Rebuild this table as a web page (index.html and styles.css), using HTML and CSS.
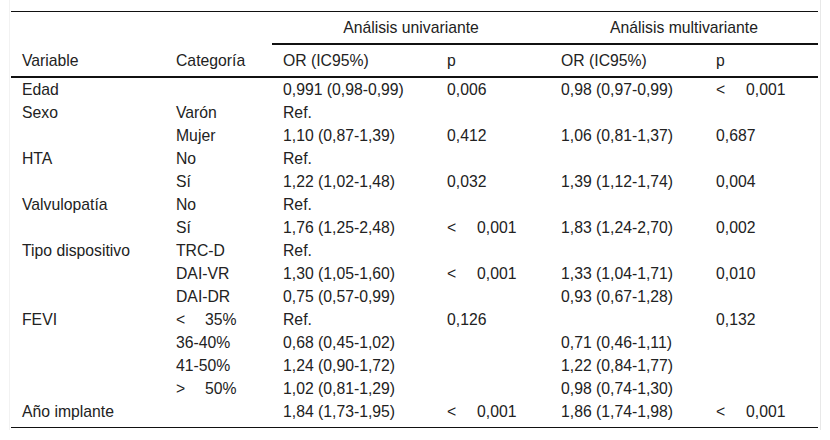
FILE: index.html
```html
<!DOCTYPE html>
<html lang="es">
<head>
<meta charset="utf-8">
<title>Tabla</title>
<link rel="stylesheet" href="styles.css">
</head>
<body>
<div class="frame">
<table class="tbl">
  <colgroup>
    <col class="c1"><col class="c2"><col class="c3"><col class="c4"><col class="c5"><col class="c6">
  </colgroup>
  <thead>
    <tr class="group">
      <th></th><th></th>
      <th colspan="2" class="gh">Análisis univariante</th>
      <th colspan="2" class="gh">Análisis multivariante</th>
    </tr>
    <tr class="cols">
      <th>Variable</th><th>Categoría</th><th>OR (IC95%)</th><th>p</th><th>OR (IC95%)</th><th>p</th>
    </tr>
  </thead>
  <tbody>
    <tr><td>Edad</td><td></td><td>0,991 (0,98-0,99)</td><td>0,006</td><td>0,98 (0,97-0,99)</td><td><span class="sym">&lt;</span>0,001</td></tr>
    <tr><td>Sexo</td><td>Varón</td><td>Ref.</td><td></td><td></td><td></td></tr>
    <tr><td></td><td>Mujer</td><td>1,10 (0,87-1,39)</td><td>0,412</td><td>1,06 (0,81-1,37)</td><td>0,687</td></tr>
    <tr><td>HTA</td><td>No</td><td>Ref.</td><td></td><td></td><td></td></tr>
    <tr><td></td><td>Sí</td><td>1,22 (1,02-1,48)</td><td>0,032</td><td>1,39 (1,12-1,74)</td><td>0,004</td></tr>
    <tr><td>Valvulopatía</td><td>No</td><td>Ref.</td><td></td><td></td><td></td></tr>
    <tr><td></td><td>Sí</td><td>1,76 (1,25-2,48)</td><td><span class="sym">&lt;</span>0,001</td><td>1,83 (1,24-2,70)</td><td>0,002</td></tr>
    <tr><td>Tipo dispositivo</td><td>TRC-D</td><td>Ref.</td><td></td><td></td><td></td></tr>
    <tr><td></td><td>DAI-VR</td><td>1,30 (1,05-1,60)</td><td><span class="sym">&lt;</span>0,001</td><td>1,33 (1,04-1,71)</td><td>0,010</td></tr>
    <tr><td></td><td>DAI-DR</td><td>0,75 (0,57-0,99)</td><td></td><td>0,93 (0,67-1,28)</td><td></td></tr>
    <tr><td>FEVI</td><td><span class="sym2">&lt;</span>35%</td><td>Ref.</td><td>0,126</td><td></td><td>0,132</td></tr>
    <tr><td></td><td>36-40%</td><td>0,68 (0,45-1,02)</td><td></td><td>0,71 (0,46-1,11)</td><td></td></tr>
    <tr><td></td><td>41-50%</td><td>1,24 (0,90-1,72)</td><td></td><td>1,22 (0,84-1,77)</td><td></td></tr>
    <tr><td></td><td><span class="sym2">&gt;</span>50%</td><td>1,02 (0,81-1,29)</td><td></td><td>0,98 (0,74-1,30)</td><td></td></tr>
    <tr class="last"><td>Año implante</td><td></td><td>1,84 (1,73-1,95)</td><td><span class="sym">&lt;</span>0,001</td><td>1,86 (1,74-1,98)</td><td><span class="sym">&lt;</span>0,001</td></tr>
  </tbody>
</table>
</div>
</body>
</html>
```

FILE: styles.css
```css
html, body {
  margin: 0;
  padding: 0;
  background: #fff;
}

body {
  font-family: "Liberation Sans", Arial, sans-serif;
  font-size: 15.75px;
  color: #222;
}

.frame {
  margin-left: 9px;
  width: 809px;
  padding: 11px 0 2px 1px;
  border-left: 1px solid #f2f2f2;
  border-right: 1px solid #e8e8e8;
}

.tbl {
  border-collapse: collapse;
  table-layout: fixed;
  width: 807px;
  border-top: 1px solid #111;
  border-bottom: 1px solid #111;
}

.c1 { width: 154px; }
.c2 { width: 107px; }
.c3 { width: 164px; }
.c4 { width: 114px; }
.c5 { width: 155px; }
.c6 { width: 113px; }

.tbl th,
.tbl td {
  padding: 3px 11px;
  line-height: 17px;
  text-align: left;
  font-weight: normal;
  white-space: nowrap;
  vertical-align: middle;
}

.group th {
  height: 31px;
  padding-top: 0;
  padding-bottom: 0;
}

.group .gh {
  text-align: center;
  border-bottom: 2px solid #111;
}

.cols th {
  height: 31px;
  padding-top: 0;
  padding-bottom: 0;
  border-bottom: 2px solid #111;
}

.tbl tbody td {
  height: 17px;
}

.last td {
  padding-bottom: 7px;
}

.sym {
  display: inline-block;
  width: 30px;
}

.sym2 {
  display: inline-block;
  width: 29px;
}
```
